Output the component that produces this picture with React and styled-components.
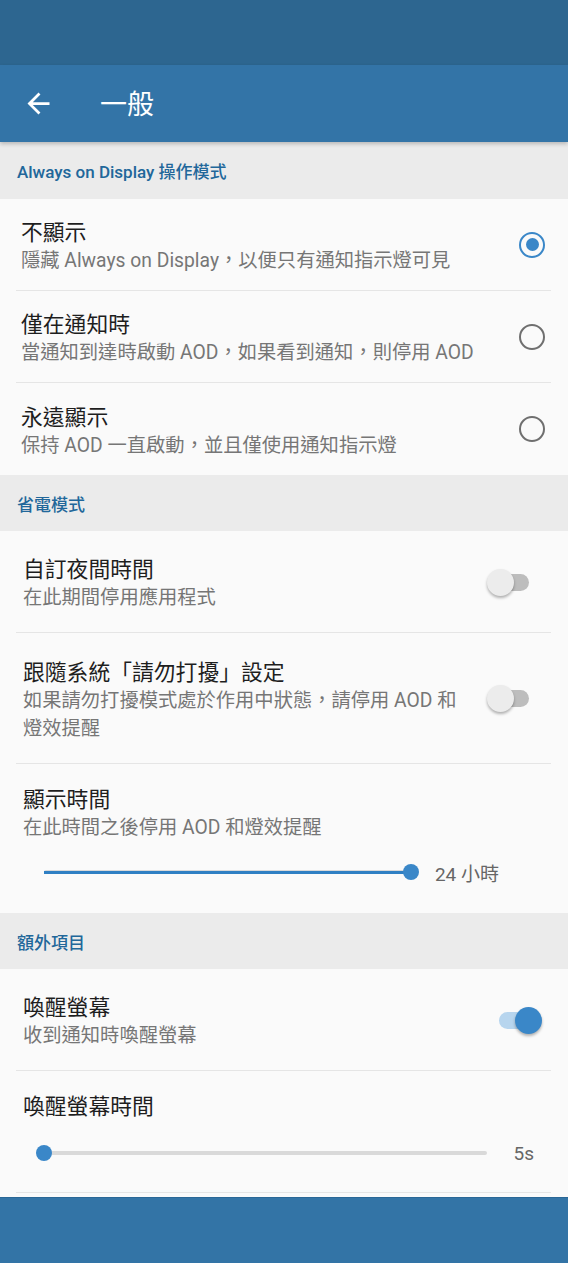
import styled, { createGlobalStyle } from "styled-components";

const BLUE = "#3a87c8";

const GlobalStyle = createGlobalStyle`
  * { box-sizing: border-box; }
  html, body { margin: 0; padding: 0; background: #fafafa; }
  body {
    font-family: Roboto, "Noto Sans CJK TC", "Noto Sans", sans-serif;
    -webkit-font-smoothing: antialiased;
  }
`;

const Screen = styled.div`
  display: flex;
  flex-direction: column;
  height: 100vh;
  overflow: hidden;
  background: #fafafa;
`;

const StatusBar = styled.div`
  height: 65px;
  flex-shrink: 0;
  background: #2d6690;
`;

const AppBar = styled.header`
  position: relative;
  z-index: 1;
  display: flex;
  align-items: center;
  height: 77px;
  flex-shrink: 0;
  padding-left: 22px;
  background: #3374a7;
  box-shadow: 0 2px 4px rgba(0, 0, 0, 0.22);
`;

const BackButton = styled.button`
  display: flex;
  padding: 0;
  border: none;
  background: none;
  color: #fff;
`;

const AppTitle = styled.h1`
  margin: 0 0 2px 45px;
  font-size: 27px;
  font-weight: 400;
  color: #fff;
`;

const Content = styled.main`
  flex: 1;
  overflow: hidden;
`;

const SectionHeader = styled.div`
  display: flex;
  align-items: center;
  height: ${p => p.$height || 56}px;
  padding-left: 17px;
  background: #ebebeb;
  color: #21679a;
  font-size: 17px;
  font-weight: 500;
`;

const Row = styled.div`
  display: flex;
  align-items: center;
  height: ${p => p.$height}px;
  padding-left: ${p => p.$indent}px;
`;

const SliderItem = styled.div`
  display: flex;
  flex-direction: column;
  height: ${p => p.$height}px;
  padding: 22px 0 0 ${p => p.$indent}px;
`;

const RowText = styled.div`
  flex: 1;
  display: flex;
  flex-direction: column;
  padding: 5px ${p => p.$wrap || 0}px 0 0;
`;

const Title = styled.div`
  font-size: 21.8px;
  line-height: 28px;
  color: #1e1e1e;
  white-space: nowrap;
`;

const Subtitle = styled.div`
  font-size: 19.3px;
  line-height: 28px;
  color: #767676;
`;

const Divider = styled.hr`
  height: 1px;
  margin: 0 17px 0 16px;
  border: none;
  background: #e5e5e5;
`;

const Radio = styled.span`
  flex-shrink: 0;
  width: 26px;
  height: 26px;
  margin-right: 23px;
  border-radius: 50%;
  border: 2.5px solid ${p => (p.$checked ? BLUE : "#6f6f6f")};
  display: flex;
  align-items: center;
  justify-content: center;

  &::after {
    content: "";
    display: ${p => (p.$checked ? "block" : "none")};
    width: 13px;
    height: 13px;
    border-radius: 50%;
    background: ${BLUE};
  }
`;

const Switch = styled.span`
  position: relative;
  width: 46px;
  height: 28px;
  flex-shrink: 0;
  margin-right: ${p => (p.$on ? 27 : 35)}px;
`;

const SwitchTrack = styled.span`
  position: absolute;
  left: 4px;
  right: 4px;
  top: 6px;
  height: 17px;
  border-radius: 9px;
  background: ${p => (p.$on ? "#b7d5ee" : "#bdbdbd")};
`;

const SwitchThumb = styled.span`
  position: absolute;
  top: 1px;
  left: ${p => (p.$on ? 20 : 0)}px;
  width: 27px;
  height: 27px;
  border-radius: 50%;
  background: ${p => (p.$on ? BLUE : "#ececec")};
  box-shadow: 0 2px 3px rgba(0, 0, 0, 0.3);
`;

const SliderRow = styled.div`
  display: flex;
  align-items: center;
  height: 40px;
  margin-top: ${p => p.$top}px;
  padding: 0 ${p => p.$right}px 0 ${p => 44 - p.$indent}px;
`;

const Track = styled.div`
  position: relative;
  flex: 1;
  height: 4px;
  border-radius: 2px;
  background: #d9d9d9;
`;

const TrackFill = styled.div`
  position: absolute;
  left: 0;
  top: 0.5px;
  height: 3px;
  background: #2f7fc3;
`;

const Thumb = styled.span`
  position: absolute;
  top: 50%;
  width: 16px;
  height: 16px;
  margin: -8px 0 0 -8px;
  border-radius: 50%;
  background: ${BLUE};
`;

const SliderValue = styled.span`
  margin-left: ${p => p.$gap}px;
  font-size: 19px;
  color: #666;
  white-space: nowrap;
`;

const BottomBar = styled.nav`
  height: 66px;
  flex-shrink: 0;
  background: #3374a6;
  border-top: 1.5px solid #2a6796;
`;

const ArrowBack = () => (
  <svg width="33" height="33" viewBox="0 0 24 24" fill="currentColor">
    <path d="M20 11H7.83l5.59-5.59L12 4l-8 8 8 8 1.41-1.41L7.83 13H20v-2z" />
  </svg>
);

const Slider = ({ value, label, indent, right, gap, top }) => (
  <SliderRow $indent={indent} $right={right} $top={top}>
    <Track>
      <TrackFill style={{ width: `${value * 100}%` }} />
      <Thumb style={{ left: `${value * 100}%` }} />
    </Track>
    <SliderValue $gap={gap}>{label}</SliderValue>
  </SliderRow>
);

const ToggleSwitch = ({ on }) => (
  <Switch $on={on}>
    <SwitchTrack $on={on} />
    <SwitchThumb $on={on} />
  </Switch>
);

const modes = [
  { title: "不顯示", desc: "隱藏 Always on Display，以便只有通知指示燈可見", checked: true },
  { title: "僅在通知時", desc: "當通知到達時啟動 AOD，如果看到通知，則停用 AOD" },
  { title: "永遠顯示", desc: "保持 AOD 一直啟動，並且僅使用通知指示燈" },
];

const App = () => (
  <Screen>
    <GlobalStyle />
    <StatusBar />
    <AppBar>
      <BackButton>
        <ArrowBack />
      </BackButton>
      <AppTitle>一般</AppTitle>
    </AppBar>

    <Content>
      <SectionHeader $height={57}>Always on Display 操作模式</SectionHeader>
      {modes.map((m, i) => (
        <div key={m.title}>
          <Row $indent={21} $height={i < modes.length - 1 ? 91 : 92}>
            <RowText>
              <Title>{m.title}</Title>
              <Subtitle>{m.desc}</Subtitle>
            </RowText>
            <Radio $checked={m.checked} />
          </Row>
          {i < modes.length - 1 && <Divider />}
        </div>
      ))}

      <SectionHeader>省電模式</SectionHeader>
      <Row $indent={23} $height={101}>
        <RowText $wrap={26}>
          <Title>自訂夜間時間</Title>
          <Subtitle>在此期間停用應用程式</Subtitle>
        </RowText>
        <ToggleSwitch />
      </Row>
      <Divider />
      <Row $indent={23} $height={130}>
        <RowText $wrap={26}>
          <Title>跟隨系統「請勿打擾」設定</Title>
          <Subtitle>如果請勿打擾模式處於作用中狀態，請停用 AOD 和燈效提醒</Subtitle>
        </RowText>
        <ToggleSwitch />
      </Row>
      <Divider />
      <SliderItem $indent={23} $height={149}>
        <Title>顯示時間</Title>
        <Subtitle>在此時間之後停用 AOD 和燈效提醒</Subtitle>
        <Slider value={1} label="24 小時" indent={23} right={69} gap={24} top={10} />
      </SliderItem>

      <SectionHeader>額外項目</SectionHeader>
      <Row $indent={23} $height={101}>
        <RowText $wrap={26}>
          <Title>喚醒螢幕</Title>
          <Subtitle>收到通知時喚醒螢幕</Subtitle>
        </RowText>
        <ToggleSwitch on />
      </Row>
      <Divider />
      <SliderItem $indent={23} $height={121}>
        <Title>喚醒螢幕時間</Title>
        <Slider value={0} label="5s" indent={23} right={34} gap={27} top={12} />
      </SliderItem>
      <Divider />
    </Content>

    <BottomBar />
  </Screen>
);

export default App;
